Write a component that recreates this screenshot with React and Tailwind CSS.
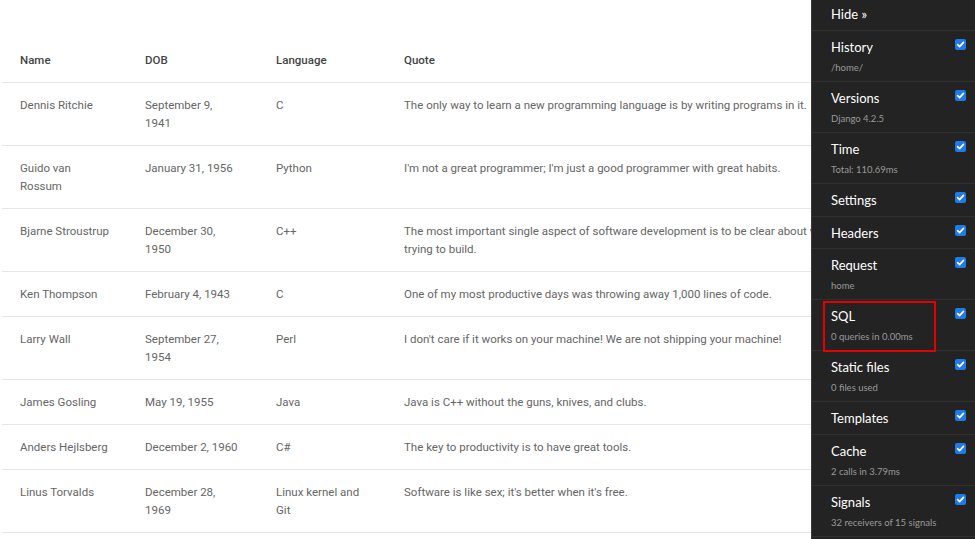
import React from "react";

const rows = [
  [["Dennis Ritchie"], ["September 9,", "1941"], ["C"], ["The only way to learn a new programming language is by writing programs in it."]],
  [["Guido van", "Rossum"], ["January 31, 1956"], ["Python"], ["I'm not a great programmer; I'm just a good programmer with great habits."]],
  [["Bjarne Stroustrup"], ["December 30,", "1950"], ["C++"], ["The most important single aspect of software development is to be clear about what you are", "trying to build."]],
  [["Ken Thompson"], ["February 4, 1943"], ["C"], ["One of my most productive days was throwing away 1,000 lines of code."]],
  [["Larry Wall"], ["September 27,", "1954"], ["Perl"], ["I don't care if it works on your machine! We are not shipping your machine!"]],
  [["James Gosling"], ["May 19, 1955"], ["Java"], ["Java is C++ without the guns, knives, and clubs."]],
  [["Anders Hejlsberg"], ["December 2, 1960"], ["C#"], ["The key to productivity is to have great tools."]],
  [["Linus Torvalds"], ["December 28,", "1969"], ["Linux kernel and", "Git"], ["Software is like sex; it's better when it's free."]],
];

const panels = [
  ["History", "/home/"],
  ["Versions", "Django 4.2.5"],
  ["Time", "Total: 110.69ms"],
  ["Settings", null],
  ["Headers", null],
  ["Request", "home"],
  ["SQL", "0 queries in 0.00ms"],
  ["Static files", "0 files used"],
  ["Templates", null],
  ["Cache", "2 calls in 3.79ms"],
  ["Signals", "32 receivers of 15 signals"],
];

function Check() {
  return (
    <span className="absolute right-[9px] top-[8px] flex h-[11px] w-[11px] items-center justify-center rounded-[2px] bg-[#1f7be6]">
      <svg width="9" height="9" viewBox="0 0 10 10">
        <path d="M1.8 5.2 L4 7.4 L8.3 2.6" fill="none" stroke="#fff" strokeWidth="1.8" strokeLinecap="round" strokeLinejoin="round" />
      </svg>
    </span>
  );
}

export default function App() {
  return (
    <div className="relative min-h-screen bg-white" style={{ fontFamily: "Roboto, 'Liberation Sans', sans-serif" }}>
      <div className="pl-[2px] pt-[38px]">
        <table className="w-[960px] table-fixed border-collapse whitespace-nowrap text-left text-[11.5px] leading-[18px] text-[#666]">
          <colgroup>
            <col className="w-[125px]" />
            <col className="w-[131px]" />
            <col className="w-[128px]" />
            <col />
          </colgroup>
          <thead>
            <tr className="border-b border-[#e6e6e6]">
              <th className="px-[18px] py-[13px] font-medium text-[#444]">Name</th>
              <th className="px-[18px] py-[13px] font-medium text-[#444]">DOB</th>
              <th className="px-[18px] py-[13px] font-medium text-[#444]">Language</th>
              <th className="px-[18px] py-[13px] font-medium text-[#444]">Quote</th>
            </tr>
          </thead>
          <tbody>
            {rows.map((r) => (
              <tr key={r[0][0]} className="border-b border-[#e6e6e6] align-top">
                {r.map((c, i) => (
                  <td key={i} className="px-[18px] py-[13px]">
                    {c.map((line, j) => (
                      <div key={j}>{line}</div>
                    ))}
                  </td>
                ))}
              </tr>
            ))}
          </tbody>
        </table>
      </div>

      <div
        className="fixed right-0 top-0 h-screen w-[164px] border-l border-[#3a3a3a] bg-[#232323] text-white"
        style={{ fontFamily: "Lato, 'Open Sans', sans-serif" }}
      >
        <div className="flex h-[31px] items-center border-b border-[#303030] pl-[19px] text-[13px]">Hide »</div>
        {panels.map(([t, s]) => (
          <div key={t} className={`relative border-b border-[#303030] pl-[19px] pt-[8px] ${s ? "pb-[6px]" : "pb-[7.5px]"}`}>
            <div className="text-[13px] leading-[16px]">{t}</div>
            {s && <div className="mt-[6px] text-[9.5px] leading-[14px] text-[#9a9a9a]">{s}</div>}
            <Check />
          </div>
        ))}
        <div className="absolute left-[11px] top-[301px] h-[51px] w-[113px] border-2 border-[#e60000]" />
      </div>
    </div>
  );
}
